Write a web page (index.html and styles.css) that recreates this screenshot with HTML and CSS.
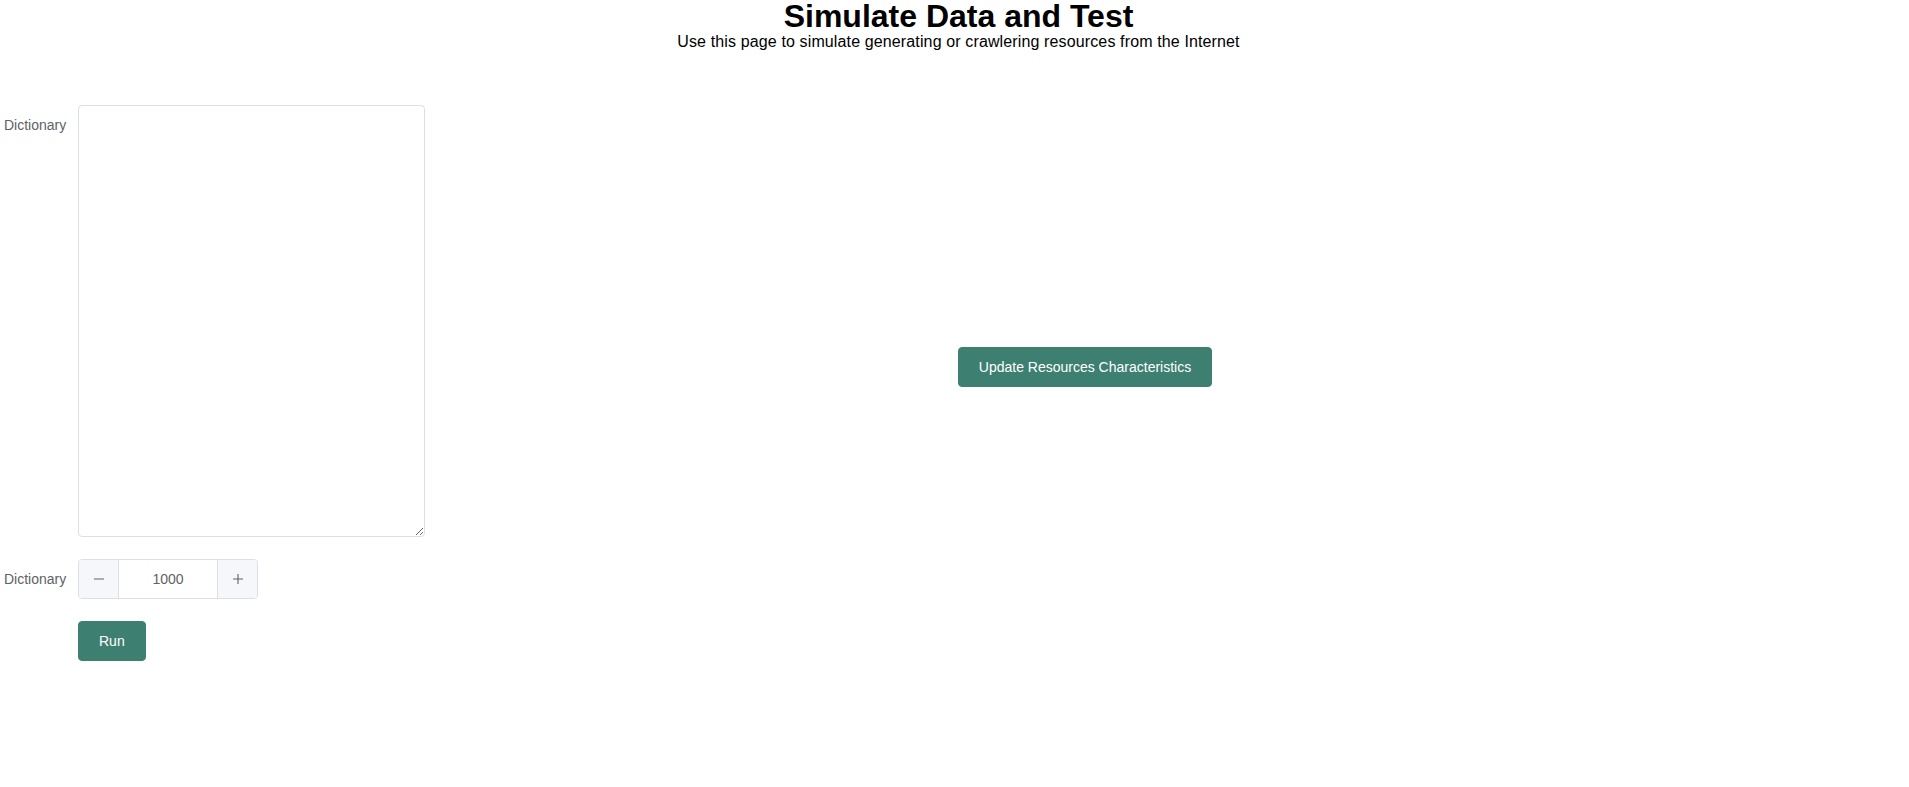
FILE: index.html
```html
<!DOCTYPE html>
<html>
<head>
<meta charset="utf-8">
<title>Simulate Data and Test</title>
<link rel="stylesheet" href="styles.css">
</head>
<body>
<header class="header">
  <h1 class="title">Simulate Data and Test</h1>
  <p class="subtitle">Use this page to simulate generating or crawlering resources from the Internet</p>
</header>
<main class="main">
  <form class="form">
    <div class="form-item">
      <label class="form-label">Dictionary</label>
      <div class="form-content">
        <textarea class="textarea"></textarea>
      </div>
    </div>
    <div class="form-item">
      <label class="form-label">Dictionary</label>
      <div class="form-content">
        <div class="number">
          <span class="num-btn num-dec">
            <svg width="12" height="12" viewBox="0 0 12 12"><path d="M1 6h10" stroke="#606266" stroke-width="1.1" fill="none"/></svg>
          </span>
          <input class="num-input" type="text" value="1000">
          <span class="num-btn num-inc">
            <svg width="12" height="12" viewBox="0 0 12 12"><path d="M1 6h10M6 1v10" stroke="#606266" stroke-width="1.1" fill="none"/></svg>
          </span>
        </div>
      </div>
    </div>
    <div class="form-item">
      <div class="form-label"></div>
      <div class="form-content">
        <button type="button" class="btn">Run</button>
      </div>
    </div>
  </form>
  <section class="side">
    <button type="button" class="btn">Update Resources Characteristics</button>
  </section>
</main>
</body>
</html>
```
FILE: styles.css
```css
html, body {
  margin: 0;
  padding: 0;
  background: #fff;
  font-family: "Liberation Sans", Arial, sans-serif;
}
.header {
  padding-left: 8px;
  text-align: center;
  color: #000;
}
.title {
  margin: 0;
  font-size: 32px;
  line-height: 32px;
  font-weight: bold;
}
.subtitle {
  margin: 0;
  font-size: 16px;
  line-height: 20px;
  letter-spacing: 0.13px;
}
.main {
  display: flex;
  align-items: flex-start;
  margin-top: 53px;
  padding-left: 4px;
}
.form {
  width: 421px;
  flex: none;
}
.form-item {
  display: flex;
  margin-bottom: 22px;
}
.form-label {
  width: 74px;
  flex: none;
  box-sizing: border-box;
  text-align: left;
  font-size: 14px;
  line-height: 40px;
  color: #606266;
}
.form-content {
  flex: 1;
  min-width: 0;
}
.textarea {
  display: block;
  box-sizing: border-box;
  width: 347px;
  height: 432px;
  margin: 0;
  padding: 5px 15px;
  border: 1px solid #dcdfe6;
  border-radius: 4px;
  font-family: "Liberation Sans", Arial, sans-serif;
  font-size: 14px;
  color: #606266;
  resize: vertical;
  outline: none;
}
.number {
  display: flex;
  width: 180px;
  height: 40px;
  box-sizing: border-box;
  border: 1px solid #dcdfe6;
  border-radius: 4px;
  overflow: hidden;
}
.num-btn {
  width: 39px;
  flex: none;
  display: flex;
  align-items: center;
  justify-content: center;
  background: #f5f7fa;
}
.num-dec {
  border-right: 1px solid #dcdfe6;
}
.num-inc {
  border-left: 1px solid #dcdfe6;
}
.num-input {
  flex: 1;
  min-width: 0;
  border: none;
  margin: 0;
  padding: 0;
  text-align: center;
  font-family: "Liberation Sans", Arial, sans-serif;
  font-size: 14px;
  color: #606266;
  outline: none;
  background: #fff;
}
.btn {
  display: inline-block;
  box-sizing: border-box;
  height: 40px;
  margin: 0;
  padding: 0 20px;
  border: 1px solid #3d7f71;
  border-radius: 4px;
  background: #3d7f71;
  color: #fff;
  font-family: "Liberation Sans", Arial, sans-serif;
  font-size: 14px;
  line-height: 1;
  cursor: pointer;
}
.side {
  width: 1320px;
  height: 524px;
  display: flex;
  align-items: center;
  justify-content: center;
}
```
